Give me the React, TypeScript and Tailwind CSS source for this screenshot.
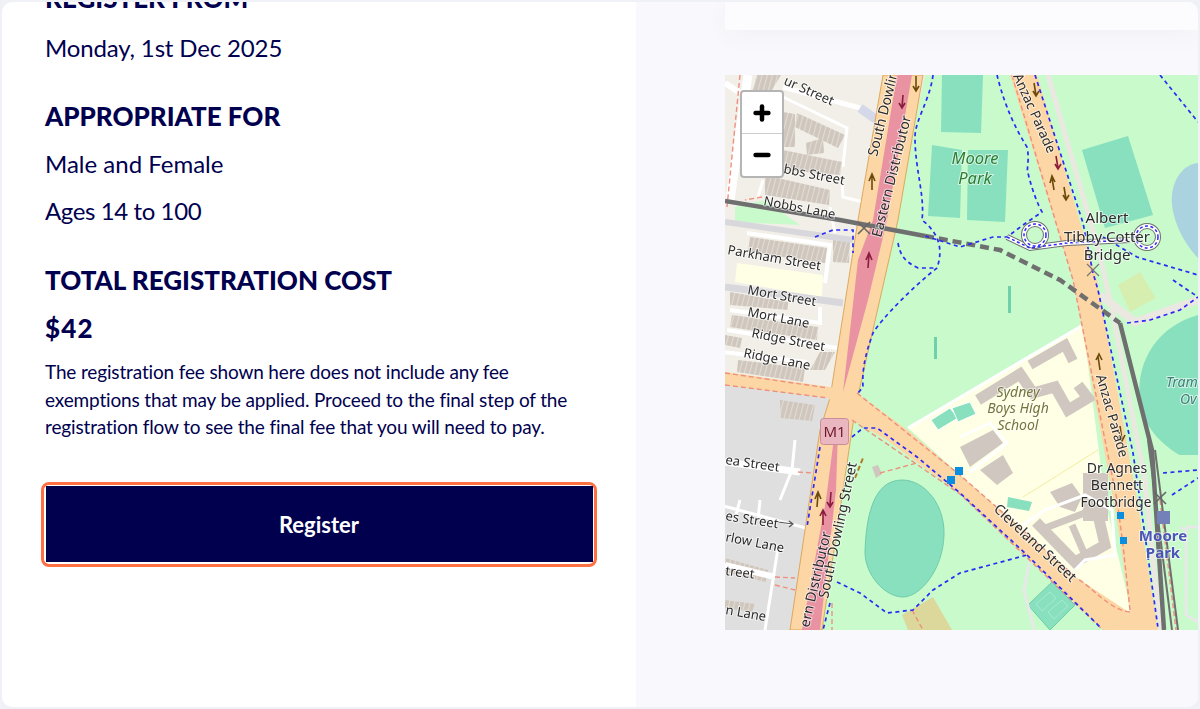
import React from "react";
import { Plus, Minus } from "lucide-react";

type LabelProps = {
  x: number;
  y: number;
  r?: number;
  size?: number;
  fill?: string;
  italic?: boolean;
  bold?: boolean;
  anchor?: "start" | "middle" | "end";
  children: string;
};

const Label = ({ x, y, r = 0, size = 13, fill = "#2b2b2b", italic, bold, anchor = "start", children }: LabelProps) => (
  <text
    x={x}
    y={y}
    fontSize={size}
    fill={fill}
    fontStyle={italic ? "italic" : "normal"}
    fontWeight={bold ? 700 : 400}
    textAnchor={anchor}
    transform={r ? `rotate(${r} ${x} ${y})` : undefined}
    stroke="#ffffff"
    strokeOpacity={0.6}
    strokeWidth={2}
    paintOrder="stroke"
  >
    {children}
  </text>
);

// terraces along the streets on the west side of the map
const terraces = [
  "M757 75 L781 75 L766 100 L752 92 Z",
  "M797 113 L845 135 L838 148 L795 127 Z",
  "M806 143 L823 138 L824 153 L807 155 Z",
  "M783 112 L795 114 L795 147 L783 147 Z",
  "M783 150 L842 162 L840 175 L783 170 Z",
  "M765 175 L830 190 L829 205 L765 195 Z",
  "M750 237 L827 248 L825 263 L748 252 Z",
  "M730 292 L788 302 L788 310 L730 305 Z",
  "M732 315 L818 327 L817 340 L730 327 Z",
  "M725 335 L742 338 L740 348 L725 345 Z",
  "M738 360 L805 368 L803 382 L737 372 Z",
  "M833 237 L850 240 L849 263 L833 262 Z",
  "M820 352 L835 352 L825 370 L810 370 Z",
  "M780 400 L815 405 L812 421 L781 418 Z",
  "M725 558 L768 570 L766 582 L725 572 Z",
  "M725 600 L755 604 L752 612 L725 608 Z",
];

const dashedPaths = [
  "M933 75 C930 100 915 120 915 137 C915 170 925 195 922 220 C935 230 945 245 937 268 C915 285 880 320 873 333 C865 355 862 370 863 387 L858 393",
  "M898 243 C900 255 905 262 918 268 L937 268",
  "M815 237 L833 230 L853 230 L853 253",
  "M997 75 C1002 95 1010 120 1027 147 C1030 160 1026 170 1028 173 C1032 190 1038 205 1042 212 L1023 225 L1007 237 L993 237 L960 247 L922 235",
  "M1035 75 L1083 223 L1093 273 L1098 290 L1133 453 L1140 500 L1158 628",
  "M1160 75 L1198 122",
  "M1103 237 L1137 257 L1198 275",
  "M1173 280 L1198 297",
  "M1127 323 L1150 320 L1180 310 L1198 297",
  "M1163 473 L1198 470",
  "M1172 495 L1198 478",
  "M852 437 L863 428 L877 428 L917 457 L960 493 L1027 555 L1100 627",
  "M837 582 L860 593 L887 613 L913 610 L933 590 L960 573 L1027 555",
  "M820 447 L807 527",
  "M830 603 L823 630",
];

const redDashedPaths = [
  "M725 373 L828 388",
  "M725 385 L828 398",
  "M857 393 L960 475 L1077 578",
  "M852 420 L960 494 L1103 630",
  "M1012 75 L1073 280 L1117 500 L1123 545 L1130 610",
  "M740 75 L727 207",
  "M798 472 L813 473",
  "M775 577 L795 578 M775 585 L795 590",
  "M880 473 L917 463",
  "M912 610 L923 630",
  "M832 603 L832 630",
  "M1160 500 L1176 630",
  "M1130 612 C1110 610 1095 590 1077 578",
  "M762 197 L745 200",
];

const App = () => {
  return (
    <div className="h-[709px] w-[1200px] overflow-hidden bg-[#f0f1f6] p-[2px] font-['Lato',sans-serif]">
      <div className="flex h-full overflow-hidden rounded-[10px]">
        {/* Registration details, scrolled part way down */}
        <div className="h-full w-[634px] overflow-hidden bg-white pl-[43px] text-[#00004f]">
          <div className="-mt-[20px] w-[540px]">
            <h3 className="text-[26px] leading-[32px] font-black">REGISTER FROM</h3>
            <p className="mt-[18px] text-[24px] leading-[32px] tracking-[-0.15px]">Monday, 1st Dec 2025</p>
            <h3 className="mt-[36px] text-[26px] leading-[32px] font-black">APPROPRIATE FOR</h3>
            <p className="mt-[16px] text-[24px] leading-[32px]">Male and Female</p>
            <p className="mt-[15px] text-[24px] leading-[32px] tracking-[-0.4px]">Ages 14 to 100</p>
            <h3 className="mt-[37px] text-[26px] leading-[32px] font-black">TOTAL REGISTRATION COST</h3>
            <p className="mt-[16px] text-[26px] leading-[32px] font-black tracking-[1.2px]">$42</p>
            <p className="mt-[14px] text-[19px] leading-[27.5px] tracking-[-0.15px]">
              The registration fee shown here does not include any fee
              <br />
              exemptions that may be applied. Proceed to the final step of the
              <br />
              registration flow to see the final fee that you will need to pay.
            </p>
          </div>
          <div className="mt-[41px] ml-[-4px] w-[556px] rounded-[8px] border-[3.5px] border-[#ff7043] bg-white p-[1.5px]">
            <button className="flex h-[76px] w-full items-center justify-center bg-[#00004f] text-[22px] font-bold text-white">
              Register
            </button>
          </div>
        </div>

        {/* Location column */}
        <div className="flex h-full flex-1 flex-col bg-[#f9f9fd] pl-[89px]">
          <div className="h-[28px] shrink-0 bg-[#fcfcfe] shadow-[0_6px_24px_rgba(20,20,80,0.04)]" />
          <div className="relative mt-[45px] h-[555px] w-full overflow-hidden bg-[#c8facc]">
            <svg
              viewBox="725 75 473 555"
              className="block h-full w-full blur-[0.5px] font-['Noto_Sans',sans-serif]"
            >
              <defs>
                <pattern id="hatch" width="5" height="5" patternUnits="userSpaceOnUse" patternTransform="rotate(15)">
                  <rect width="5" height="5" fill="#cfc6bd" />
                  <rect width="1.2" height="5" fill="#e2dcd4" />
                </pattern>
              </defs>

              {/* land use */}
              <polygon points="725,75 925,75 855,400 725,380" fill="#f2efe9" />
              <polygon points="735,207 765,200 800,225 735,222" fill="#c8facc" />
              <polygon points="725,385 832,398 815,630 725,630" fill="#dfdfdf" />
              <polygon points="737,263 823,275 822,297 735,282" fill="#ffffe5" />
              <polygon points="908,428 1083,325 1105,500 1132,615 1077,578 960,475" fill="#ffffe5" />

              {/* pitches and water */}
              <polygon points="942,75 983,75 981,133 941,132" fill="#88e0be" />
              <polygon points="932,145 962,150 960,218 928,216" fill="#88e0be" />
              <polygon points="968,150 1008,150 1005,222 967,220" fill="#88e0be" />
              <polygon points="1082,150 1128,136 1153,215 1105,228" fill="#88e0be" />
              <path
                d="M902 480 C925 480 945 505 944 535 C943 570 920 597 903 597 C885 597 865 575 865 552 C866 520 872 480 902 480 Z"
                fill="#88e0be"
                stroke="#6fcba9"
              />
              <path d="M1198 315 C1160 325 1135 360 1140 400 C1142 430 1170 450 1180 455 L1198 455 Z" fill="#88e0be" />
              <path d="M1198 163 C1180 165 1170 185 1172 205 C1175 230 1190 250 1198 258 Z" fill="#aad3df" />
              <polygon points="1028,605 1052,582 1075,605 1050,630" fill="#88e0be" stroke="#6fcba9" />
              <path d="M1036 604 L1050 592 L1056 598 L1042 611 Z M1048 612 L1062 600 L1068 606 L1054 619 Z" fill="none" stroke="#a8ead0" />
              <polygon points="1008,497 1032,502 1029,511 1007,507" fill="#88e0be" />
              <polygon points="931,420 950,408 958,418 938,430" fill="#88e0be" stroke="#ffffff" />
              <polygon points="952,408 970,402 976,414 958,422" fill="#88e0be" stroke="#ffffff" />
              <rect x="1008" y="286" width="3" height="27" fill="#6ed1ac" />
              <rect x="934" y="337" width="3" height="22" fill="#6ed1ac" />
              <polygon points="902,615 933,597 952,630 908,630" fill="#dcd89c" />
              <polygon points="1118,285 1140,272 1156,298 1130,312" fill="#d6efb0" />
              <polygon points="872,467 878,465 882,474 876,478" fill="#cfc6bd" />

              {/* terraces and buildings */}
              {terraces.map((d) => (
                <path key={d} d={d} fill="url(#hatch)" />
              ))}
              <g fill="none" stroke="#d0c8c0" strokeLinejoin="miter">
                <path d="M978 400 L1020 374 L1033 393 L1055 387 L1068 410 L1088 398 L1078 385" strokeWidth={11} />
                <path d="M1030 365 L1065 345 L1073 361" strokeWidth={10} />
                <path d="M1098 515 L1105 545 L1075 562 L1036 522" strokeWidth={11} />
                <path d="M1040 530 L1098 508 M1072 525 L1085 555" strokeWidth={7} />
              </g>
              <polygon points="960,447 993,430 1003,443 970,467" fill="#d0c8c0" />
              <polygon points="980,470 1003,455 1013,473 997,485" fill="#d0c8c0" />
              <polygon points="1050,492 1072,483 1082,497 1075,512 1060,507" fill="#d0c8c0" />
              <rect x="1083" y="473" width="25" height="48" fill="#d0c8c0" />

              {/* minor roads and paths */}
              <g fill="none" stroke="#ffffff" strokeWidth={4}>
                <path d="M748 75 L730 200" strokeWidth={9} />
                <path d="M725 83 L740 93" strokeWidth={6} />
                <path d="M783 87 L860 108" strokeWidth={5} />
                <path d="M783 97 L847 128 L843 167 M842 183 L843 197 L867 203" strokeWidth={3} />
                <path d="M763 180 L758 197 M830 207 L835 233" strokeWidth={3} />
                <path d="M860 108 L877 120" stroke="#d4d8e8" strokeWidth={9} />
                <path d="M725 222 L853 240" stroke="#d8d8dc" strokeWidth={6} />
                <path d="M747 233 L830 245 L825 283" />
                <path d="M725 287 L843 303" stroke="#d8d8dc" strokeWidth={7} />
                <path d="M730 310 L820 323 L820 307" />
                <path d="M727 330 L837 348" />
                <path d="M723 352 L807 362" />
                <path d="M725 462 L800 472" strokeWidth={7} />
                <path d="M740 500 L736 515 M760 500 L758 520 M720 505 L806 528" strokeWidth={3} />
                <path d="M795 440 L792 470 L780 500 M778 548 L765 630" strokeWidth={3} />
                <path d="M725 565 L775 577" strokeWidth={6} />
                <path d="M908 428 L1083 325" strokeWidth={3} />
                <path d="M960 437 L990 423 L1007 443 L970 472" strokeWidth={3} />
                <path d="M1023 525 L1045 510 L1085 495 L1112 510 L1115 555 L1085 560 L1075 570" strokeWidth={3} />
                <path d="M1030 558 L1024 590 L1034 630" stroke="#e8e8e8" strokeWidth={3} />
                <path d="M1023 497 L1098 450" stroke="#f3eea0" strokeWidth={1} />
                <path d="M1048 75 L1100 255 L1112 310 L1145 480 L1160 630" stroke="#ebe8e2" strokeWidth={5} />
                <path d="M1180 527 L1186 530 L1186 615 L1198 622 M1186 527 L1198 527" stroke="#e8e8e8" strokeWidth={3} />
                <path d="M1100 295 L1135 322 L1198 300" stroke="#ebe8e2" strokeWidth={8} />
              </g>

              {/* main roads */}
              <polygon
                points="883,75 923,75 898,220 857,400 852,430 822,630 790,630 820,430 830,398 858,220"
                fill="#fcd6a4"
                stroke="#d59a45"
                strokeWidth={0.8}
              />
              <polygon points="725,372 830,387 857,393 910,432 960,475 1077,578 1130,613 1103,630 960,494 887,440 852,420 828,398 725,385" fill="#fcd6a4" />
              <polygon points="1010,75 1037,75 1097,280 1137,500 1158,630 1103,630 1130,613 1117,520 1073,280" fill="#fcd6a4" />
              <polygon points="897,75 912,75 887,220 868,300 843,392 858,260 873,220" fill="#e892a2" />
              <polygon points="835,430 838,430 836,490 820,630 802,630 826,500" fill="#e892a2" />
              {redDashedPaths.map((d) => (
                <path key={d} d={d} fill="none" stroke="#ef8f7e" strokeWidth={1.4} strokeDasharray="5 3" />
              ))}
              <path d="M855 478 L863 458" stroke="#b07a20" strokeWidth={2} strokeDasharray="5 3" />

              {/* rail */}
              <path d="M725 201 L840 220 L925 236" fill="none" stroke="#6f6f6f" strokeWidth={4.5} />
              <path d="M925 236 L1000 250 L1060 280 L1120 323" fill="none" stroke="#6f6f6f" strokeWidth={4.5} strokeDasharray="9 5" />
              <path d="M1120 323 L1152 450 L1164 630" fill="none" stroke="#6f6f6f" strokeWidth={4.5} />
              <path d="M1148 440 L1172 630 M1155 450 L1178 630" fill="none" stroke="#6f6f6f" strokeWidth={2} />

              {/* footpaths */}
              {dashedPaths.map((d) => (
                <path key={d} d={d} fill="none" stroke="#2a2af5" strokeWidth={1.7} strokeDasharray="4 3.5" />
              ))}

              {/* Tibby Cotter bridge loops */}
              <g fill="none">
                <path d="M1007 237 L1030 248 L1067 243 L1130 240" stroke="#6f6f6f" strokeWidth={6} />
                <path d="M1007 237 L1030 248 L1067 243 L1130 240" stroke="#ffffff" strokeWidth={4} />
                <circle cx="1035" cy="235" r="11" stroke="#6f6f6f" strokeWidth={6} />
                <circle cx="1035" cy="235" r="11" stroke="#ffffff" strokeWidth={4} />
                <circle cx="1147" cy="237" r="11" stroke="#6f6f6f" strokeWidth={6} />
                <circle cx="1147" cy="237" r="11" stroke="#ffffff" strokeWidth={4} />
              </g>
              <g fill="none" stroke="#2a2af5" strokeWidth={1.5} strokeDasharray="3 2.5">
                <circle cx="1035" cy="235" r="11" />
                <circle cx="1147" cy="237" r="11" />
                <path d="M1007 237 L1030 248 L1067 243 L1130 240" />
              </g>

              {/* crossing marks */}
              <path d="M858 222 L870 234 M870 222 L858 234 M1154 492 L1166 504 M1166 492 L1154 504" stroke="#666666" strokeWidth={1.6} />
              <path d="M1087 264 L1099 276 M1099 264 L1087 276" stroke="#777777" strokeWidth={1.2} />
              <rect x="1157" y="511" width="13" height="13" fill="#7480b8" />

              {/* one way arrows */}
              <g fill="none" stroke="#6b4a0c" strokeWidth={1.6}>
                <path d="M916 76 L916 90 M913 86 L916 91 L919 86" />
                <path d="M872 190 L872 176 M869 181 L872 174 L875 181" />
                <path d="M1034 83 L1036 95 M1033 91 L1036 96 L1039 91" />
                <path d="M1054 190 L1052 178 M1050 183 L1052 176 L1055 182" />
                <path d="M1064 187 L1066 199 M1063 195 L1066 200 L1069 195" />
                <path d="M1100 370 L1098 356 M1096 360 L1099 354 L1102 360" />
                <path d="M1120 426 L1122 440 M1118 436 L1122 441 L1125 435" />
                <path d="M817 507 L818 494 M815 499 L818 492 L821 499" />
              </g>
              <g fill="none" stroke="#8a1c3c" strokeWidth={1.6}>
                <path d="M903 95 L902 107 M899 103 L902 108 L905 103" />
                <path d="M868 268 L869 254 M866 260 L869 253 L872 260" />
                <path d="M1056 156 L1058 168 M1055 164 L1058 169 L1061 164" />
                <path d="M831 492 L830 505 M827 502 L830 507 L833 502" />
                <path d="M823 525 L823 511 M820 516 L823 510 L826 516" />
              </g>
              <path d="M778 522 L793 524 M789 521 L793 524 L789 527" fill="none" stroke="#555555" strokeWidth={1.2} />

              {/* entrance markers */}
              <rect x="955" y="467" width="8" height="8" fill="#0a8ee0" />
              <rect x="947" y="476" width="8" height="8" fill="#0a8ee0" />
              <rect x="1117" y="512" width="7" height="7" fill="#0a8ee0" />
              <rect x="1120" y="537" width="7" height="7" fill="#0a8ee0" />

              {/* street names */}
              <Label x={783} y={84} r={24}>ur Street</Label>
              <Label x={783} y={173} r={11}>bbs Street</Label>
              <Label x={763} y={205} r={11}>Nobbs Lane</Label>
              <Label x={727} y={254} r={10}>Parkham Street</Label>
              <Label x={747} y={294} r={10}>Mort Street</Label>
              <Label x={747} y={316} r={11}>Mort Lane</Label>
              <Label x={751} y={337} r={11}>Ridge Street</Label>
              <Label x={743} y={357} r={11}>Ridge Lane</Label>
              <Label x={725} y={464} r={8}>ea Street</Label>
              <Label x={725} y={520} r={9}>es Street</Label>
              <Label x={725} y={541} r={11}>rlow Lane</Label>
              <Label x={725} y={575} r={7}>treet</Label>
              <Label x={725} y={614} r={10}>n Lane</Label>
              <Label x={877} y={157} r={-76} size={14}>South Dowling</Label>
              <Label x={881} y={238} r={-76} size={14}>Eastern Distributor</Label>
              <Label x={1013} y={76} r={66} size={13.5}>Anzac Parade</Label>
              <Label x={1096} y={376} r={74} size={13.5}>Anzac Parade</Label>
              <Label x={809} y={628} r={-77} size={14}>ern Distributor</Label>
              <Label x={828} y={599} r={-78} size={14}>South Dowling Street</Label>
              <Label x={993} y={510} r={43} size={14}>Cleveland Street</Label>
              <Label x={1107} y={223} anchor="middle" size={15}>Albert</Label>
              <Label x={1107} y={242} anchor="middle" size={15}>Tibby Cotter</Label>
              <Label x={1107} y={260} anchor="middle" size={15}>Bridge</Label>
              <Label x={1117} y={473} anchor="middle" size={14}>Dr Agnes</Label>
              <Label x={1117} y={490} anchor="middle" size={14}>Bennett</Label>
              <Label x={1116} y={507} anchor="middle" size={13.7}>Footbridge</Label>
              <Label x={975} y={164} anchor="middle" size={16.5} italic fill="#2e7d32">Moore</Label>
              <Label x={975} y={184} anchor="middle" size={16.5} italic fill="#2e7d32">Park</Label>
              <Label x={1018} y={397} anchor="middle" size={14} italic fill="#75753a">Sydney</Label>
              <Label x={1018} y={413} anchor="middle" size={14} italic fill="#75753a">Boys High</Label>
              <Label x={1018} y={430} anchor="middle" size={14} italic fill="#75753a">School</Label>
              <Label x={1166} y={387} size={14} italic fill="#3d7f74">Tram</Label>
              <Label x={1180} y={404} size={14} italic fill="#3d7f74">Ov</Label>
              <Label x={1163} y={541} anchor="middle" size={15} bold fill="#4a55b5">Moore</Label>
              <Label x={1163} y={558} anchor="middle" size={15} bold fill="#4a55b5">Park</Label>

              {/* M1 shield */}
              <rect x="820.5" y="418.5" width="28" height="26" rx="3" fill="#eab7c0" stroke="#c98d9a" />
              <text x="834.5" y="437" fontSize={15} fill="#6f1a2c" textAnchor="middle">M1</text>
            </svg>

            {/* zoom control */}
            <div className="absolute top-[15px] left-[15px] flex w-[44px] flex-col overflow-hidden rounded-[4px] border-2 border-[#b5b5b5] bg-white">
              <button className="flex h-[42px] items-center justify-center border-b border-[#cccccc]">
                <Plus size={22} strokeWidth={4.5} color="#000000" absoluteStrokeWidth />
              </button>
              <button className="flex h-[42px] items-center justify-center">
                <Minus size={22} strokeWidth={4.5} color="#000000" absoluteStrokeWidth />
              </button>
            </div>
          </div>
        </div>
      </div>
    </div>
  );
};

export default App;
